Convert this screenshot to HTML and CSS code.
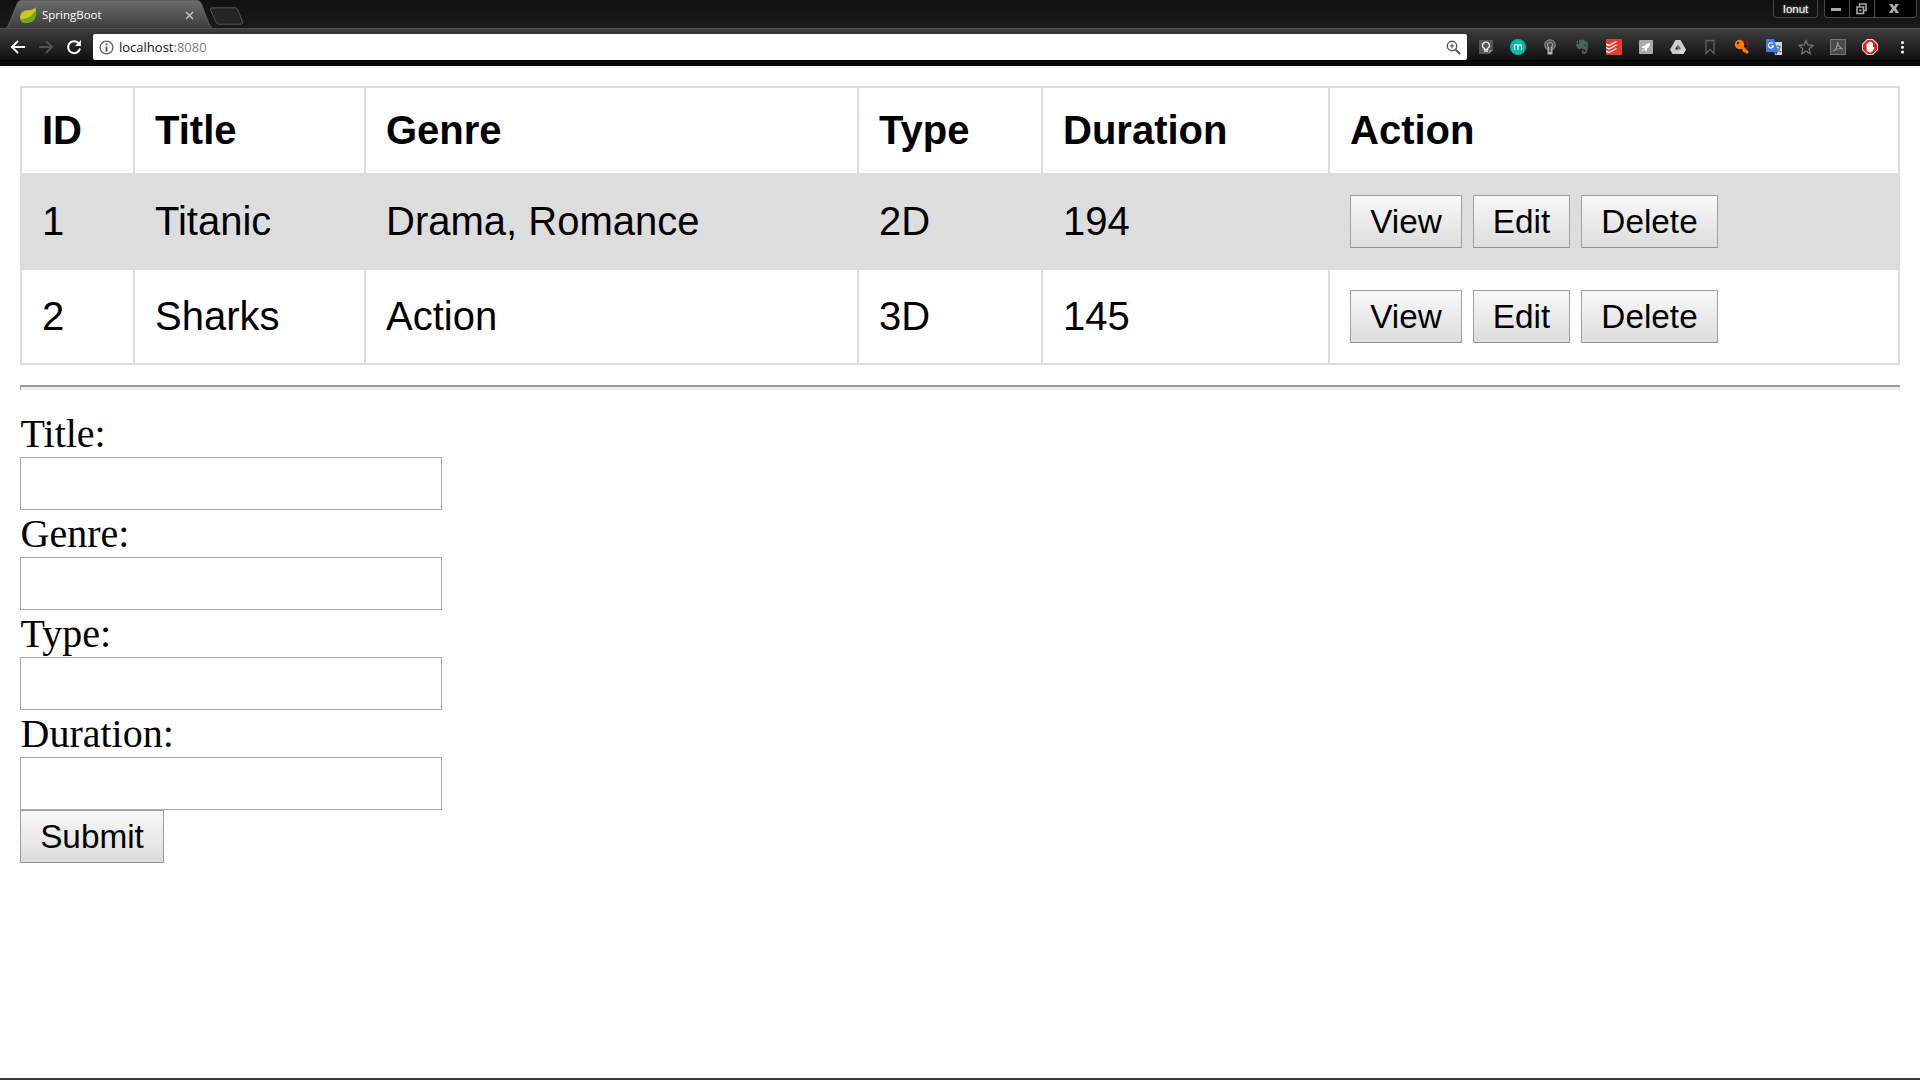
FILE: index.html
```html
<!DOCTYPE html>
<html lang="en">
<head>
<meta charset="utf-8">
<title>SpringBoot</title>
<link rel="stylesheet" href="styles.css">
</head>
<body>
<header class="browser">
  <div class="tabstrip">
    <div class="tab">
      <svg class="tab-shape" width="206" height="28" viewBox="0 0 206 28">
        <defs><linearGradient id="tabfill" x1="0" y1="0" x2="0" y2="1"><stop offset="0" stop-color="#6c6c6c"/><stop offset="1" stop-color="#3e3e3e"/></linearGradient></defs>
        <path d="M0 28C2 27 2 26 3 24L11 4Q12.500 .5 15 .5H191Q194 .5 195.500 4L203 24Q204 27 206 28Z" fill="url(#tabfill)"/>
        <path d="M0 27.500C2 27 2 26 3 24L11 4Q12.500 .5 15 .5H191Q194 .5 195.500 4L203 24Q204 27 206 27.500" fill="none" stroke="#777" stroke-opacity=".6"/>
      </svg>
      <div class="tab-content">
        <svg width="16" height="16" viewBox="0 0 16 16"><path d="M15.500 0C16.500 7 16 15 9 15.500H3C-1 14-1 6 4 4C8 2.500 13 4 15.500 0Z" fill="#c3cc1d"/><path d="M1 13.500C8 13 13 10 15.500 4C16 10 14 15 9 15.500H4Z" fill="#77a51c"/><path d="M1 13C7 13 12 10 15 5" fill="none" stroke="#568a1b"/></svg>
        <span class="tab-title">SpringBoot</span>
        <svg width="9" height="9" viewBox="0 0 9 9"><path d="M1 1L8 8M8 1L1 8" stroke="#c4c4c4" stroke-width="1.500"/></svg>
      </div>
    </div>
    <svg class="newtab" width="36" height="19" viewBox="0 0 36 19"><path d="M3 .8H26Q28 .8 29 3L33.500 15Q34 17.200 32 17.200H10Q8 17.200 7 15L1.500 3Q1 .8 3 .8Z" fill="#252525" stroke="#555"/></svg>
    <div class="spacer"></div>
    <div class="profile">Ionut</div>
    <div class="window-controls">
      <div class="control"><svg width="10" height="4"><path d="M0 1H10V4H0Z" fill="#aaa"/></svg></div>
      <div class="control"><svg width="11" height="12" viewBox="0 0 11 12"><path d="M3.500 3V1H10V7.500H8M1 4H7.500V10.500H1Z" fill="none" stroke="#aaa" stroke-width="1.600"/><path d="M3.300 6.300H5.300V8.300H3.300Z" fill="#aaa"/></svg></div>
      <div class="control wide"><svg width="10" height="9" viewBox="0 0 10 9"><path d="M0 0H3.500L5 2.500 6.500 0H10L7 4.200 10 9H6.500L5 6.300 3.500 9H0L3 4.200Z" fill="#aaa"/></svg></div>
    </div>
  </div>
  <div class="toolbar">
    <div class="nav">
      <svg width="16" height="16" viewBox="0 0 16 16"><path d="M15 8H2.500M8 2L2 8L8 14" fill="none" stroke="#fff" stroke-width="2"/></svg>
      <svg width="16" height="16" viewBox="0 0 16 16"><path d="M1 8H13.500M8 2L14 8L8 14" fill="none" stroke="#505050" stroke-width="2"/></svg>
      <svg width="16" height="16" viewBox="0 0 16 16"><path d="M12.500 4A6 6 0 1 0 14 9.500" fill="none" stroke="#fff" stroke-width="2"/><path d="M15 1V7H9Z" fill="#fff"/></svg>
    </div>
    <div class="omnibox">
      <svg width="15" height="15" viewBox="0 0 15 15"><circle cx="7.500" cy="7.500" r="6.400" fill="none" stroke="#606060" stroke-width="1.300"/><path d="M6.600 3.500H8.400V5.300H6.600ZM6.600 6.500H8.400V11.500H6.600Z" fill="#505050"/></svg>
      <span class="url">localhost<span class="port">:8080</span></span>
      <svg width="15" height="15" viewBox="0 0 15 15"><circle cx="6" cy="6" r="4.700" fill="none" stroke="#555" stroke-width="1.400"/><path d="M9.500 9.500L14 14" stroke="#555" stroke-width="2"/><path d="M3.800 6H8.200M6 3.800V8.200" stroke="#555" stroke-width="1.200"/></svg>
    </div>
    <div class="extensions">
      <svg viewBox="0 0 16 16"><path d="M1 1H15V11L11 15H1Z" fill="#565656"/><path d="M11 15V11H15Z" fill="#8b8b8b"/><path d="M6.300 10.500V9.300C3 7.500 4.500 3.200 8 3.200S13 7.500 9.700 9.300V10.500Z" fill="none" stroke="#eee" stroke-width="1.300"/><path d="M6 12.200H10" stroke="#eee" stroke-width="1.400"/></svg>
      <svg viewBox="0 0 16 16"><circle cx="8" cy="8" r="8" fill="#08bba8"/><path d="M4.500 11V5.500M4.500 7.200Q4.700 5.600 6.300 5.600T8 7.200V11M8 7.200Q8.300 5.600 9.800 5.600T11.500 7.200V11" fill="none" stroke="#e8fffc" stroke-width="1.200"/></svg>
      <svg viewBox="0 0 16 16"><circle cx="8" cy="6" r="5.200" fill="#555" stroke="#858585" stroke-width="1.200"/><circle cx="8" cy="6" r="2.700" fill="none" stroke="#999"/><path d="M5.500 8H10.500V15.500H5.500Z" fill="#aaa"/><path d="M8 5V13" stroke="#444" stroke-width="1.500"/><path d="M7 14H9" stroke="#ddd"/></svg>
      <svg viewBox="0 0 16 16"><path d="M5 1Q10-.5 11 2Q14 2 14 6Q14 15 10 15Q7 15 8 11.500L9.500 11Q9 13 10.500 13Q12 13 11.500 10.500Q9 11 7.500 9Q6 11 4 9.500Q2 8 2 5H5Z" fill="#516065"/><path d="M1.500 4L4 1V4Z" fill="#516065"/><path d="M10 6.500Q11.500 5.500 12.500 7" stroke="#222" fill="none"/></svg>
      <svg viewBox="0 0 16 16"><rect width="16" height="16" rx="1" fill="#e43d30"/><path d="M0 5L3 6.500L10.500 2.500M0 8.500L3 10L10.500 6M0 12L3 13.500L10.500 9.500" fill="none" stroke="#fff" stroke-width="1.300"/></svg>
      <svg viewBox="0 0 16 16"><rect x="1" y="1" width="14" height="14" rx="1" fill="#aaa"/><path d="M12 4Q8 4 6.500 7H4.500L3.800 9H6L7 10V12.200L9 11.500V9.500Q12 8 12 4Z" fill="#fff"/><path d="M4 12L6 10" stroke="#fff"/></svg>
      <svg viewBox="0 0 16 16"><path d="M5.500 1H10.500L16 10.500L13.500 15H2.500L0 10.500Z" fill="#ccc"/><path d="M8 5.500L11 10.500H5Z" fill="#282828"/><path d="M5.500 1L11 10.500H16L13.500 15H10.500L8 10.500Z" fill="#eee" opacity=".35"/></svg>
      <svg viewBox="0 0 16 16"><path d="M4 1.500H12V14.500L8 10.500L4 14.500Z" fill="none" stroke="#606060" stroke-width="1.300"/></svg>
      <svg viewBox="0 0 16 16"><circle cx="5.500" cy="5.500" r="4.700" fill="#ff7b00"/><path d="M7 7L14 14" stroke="#ff7b00" stroke-width="3"/><path d="M9 11L11 13" stroke="#ff7b00" stroke-width="2"/><circle cx="4" cy="4" r="1.300" fill="#333"/><path d="M13.500 1.500V6M13.500 7.500V9" stroke="#b50020" stroke-width="1.700"/></svg>
      <svg viewBox="0 0 16 16"><path d="M7 3H16V16H9Z" fill="#d7d7d7"/><path d="M9 7.500H15M12 6V8M14 8Q13 12 9.500 13.500M10.500 9Q12 12 15 13" fill="none" stroke="#607b80" stroke-width="1.200"/><path d="M0 0H8L12 13H1Q0 13 0 12Z" fill="#427eea"/><path d="M9 13H12L10 16Z" fill="#214fae"/><path d="M7 4.700A2.600 2.600 0 1 0 7.500 7H5.200" fill="none" stroke="#fff" stroke-width="1.200"/></svg>
      <svg viewBox="0 0 16 16"><path d="M8 1.500L10 6L15 6.500L11.200 9.800L12.300 14.700L8 12.100L3.700 14.700L4.800 9.800L1 6.500L6 6Z" fill="none" stroke="#747474" stroke-width="1.300"/></svg>
      <svg viewBox="0 0 16 16"><rect x=".5" y=".5" width="15" height="15" fill="#4b4b4b" stroke="#777"/><path d="M7.500 3Q8 8 13 10Q9 8.500 3 12Q7 11 7.700 3" fill="none" stroke="#999" stroke-width="1.100"/></svg>
      <svg viewBox="0 0 16 16"><path d="M5 0H11L16 5V11L11 16H5L0 11V5Z" fill="#ddd"/><path d="M5.500 1H10.500L15 5.500V10.500L10.500 15H5.500L1 10.500V5.500Z" fill="#e21b1b"/><path d="M4.500 4.500V10Q5 13.500 8 13.500Q10.500 13.500 12.500 8.500L11 8V4H9.800V3H8.500V2.500H7.300V3.500H6V4.500Z" fill="#fff"/><path d="M6 4.500V8M7.800 3.500V8M9.500 4V8" stroke="#ecc" stroke-width=".5"/></svg>
      <svg viewBox="0 0 16 16"><path d="M8.500 3.500H8.510M8.500 8.300H8.510M8.500 13.100H8.510" stroke="#fff" stroke-width="3" stroke-linecap="round"/></svg>
    </div>
  </div>
</header>
<main class="page">
  <table class="movies">
    <colgroup><col class="c-id"><col class="c-title"><col class="c-genre"><col class="c-type"><col class="c-duration"><col class="c-action"></colgroup>
    <tr class="head"><th>ID</th><th>Title</th><th>Genre</th><th>Type</th><th>Duration</th><th>Action</th></tr>
    <tr class="shaded"><td>1</td><td>Titanic</td><td>Drama, Romance</td><td>2D</td><td>194</td><td><div class="actions"><button class="btn view">View</button><button class="btn edit">Edit</button><button class="btn delete">Delete</button></div></td></tr>
    <tr><td>2</td><td>Sharks</td><td>Action</td><td>3D</td><td>145</td><td><div class="actions"><button class="btn view">View</button><button class="btn edit">Edit</button><button class="btn delete">Delete</button></div></td></tr>
  </table>
  <hr class="rule">
  <form class="movie-form">
    <label for="title">Title:</label><input id="title" type="text">
    <label for="genre">Genre:</label><input id="genre" type="text">
    <label for="type">Type:</label><input id="type" type="text">
    <label for="duration">Duration:</label><input id="duration" type="text">
    <button class="btn submit" type="button">Submit</button>
  </form>
</main>
<footer class="taskbar"></footer>
</body>
</html>
```
FILE: styles.css
```css
* { box-sizing: border-box; }
body {
  margin: 0;
  height: 1080px;
  display: flex;
  flex-direction: column;
  overflow: hidden;
  background: #fff;
  color: #000;
}
svg { display: block; flex: none; }

/* Browser frame */
.browser { height: 66px; flex: none; background: #080808; font-family: "Open Sans", sans-serif; }
.tabstrip { height: 28px; display: flex; align-items: flex-start; padding: 0 3px 0 6px; background: linear-gradient(#111, #1a1a1a); }
.tab { display: grid; width: 206px; height: 28px; }
.tab-shape, .tab-content { grid-area: 1 / 1; }
.tab-content { display: flex; align-items: center; padding: 2px 18px 0 14px; }
.tab-title { flex: 1; margin-left: 6px; font-size: 11.5px; line-height: 16px; color: #fff; }
.newtab { margin: 7px 0 0 -3px; }
.spacer { flex: 1; }
.profile {
  width: 45px; height: 18px; margin-right: 6px;
  border: 1px solid #484848; border-top: 0; border-radius: 0 0 4px 4px;
  background: #111; color: #fff; font: 11.5px/18px "Liberation Sans", Arial, sans-serif; text-align: center;
  text-shadow: 0 0 3px #999;
}
.window-controls {
  display: flex; width: 93px; height: 18px;
  border: 1px solid #484848; border-top: 0; border-radius: 0 0 4px 4px; background: #000;
}
.control { width: 25px; display: flex; align-items: center; justify-content: center; padding-right: 2px; border-right: 1px solid #484848; }
.control.wide { width: 41px; padding-right: 3px; padding-bottom: 1px; border-right: 0; }
.toolbar {
  height: 33px; display: flex; align-items: center; padding-top: 5px;
  background: linear-gradient(#3e3e3e, #101010);
  border-top: 1px solid #505050;
  border-bottom: 1px solid #000;
}
.nav { width: 93px; display: flex; gap: 12px; padding-left: 10px; }
.omnibox {
  width: 1374px; height: 26px; display: flex; align-items: center; padding: 0 6px 0 6px;
  background: #fff; border-radius: 2px;
}
.url { flex: 1; margin-left: 5px; font-size: 13px; line-height: 20px; color: #111; }
.port { color: #808080; }
.extensions { display: flex; gap: 16px; padding-left: 11px; }
.extensions svg { width: 16px; height: 16px; }

/* Page content */
.page { flex: 1; padding: 20px 20px 0; }
.movies {
  width: 1880px; table-layout: fixed; border-collapse: collapse;
  font: 40px/45px "Liberation Sans", Arial, sans-serif;
}
.c-id { width: 113px; }
.c-title { width: 231px; }
.c-genre { width: 493px; }
.c-type { width: 184px; }
.c-duration { width: 287px; }
.c-action { width: 570px; }
.movies tr { height: 95px; }
.movies .head { height: 87px; }
.movies th, .movies td { border: 2px solid #ddd; padding: 0 20px; text-align: left; vertical-align: middle; }
.shaded { background: #ddd; }
.actions { display: flex; gap: 11px; }
.btn {
  height: 53px; padding: 0;
  border: 1px solid #a0a0a0; border-bottom-color: #909090; border-radius: 1px;
  background: linear-gradient(#f8f8f8, #ddd);
  color: #000; font: 33.33px/38px "Liberation Sans", Arial, sans-serif;
}
.view { width: 112px; }
.edit { width: 97px; }
.delete { width: 137px; }
.submit { width: 144px; }
.rule { height: 5px; margin: 20px 0; border: 0; border-top: 2px solid #9a9a9a; border-left: 1px solid #9a9a9a; background: #eee; }
.movie-form { display: flex; flex-direction: column; align-items: flex-start; font: 40px/47px "Liberation Serif", "Times New Roman", serif; }
.movie-form label { padding-left: .5px; }
.movie-form input { width: 422px; height: 53px; border: 1px solid #a9a9a9; padding: 3px; background: #fff; font: 33.33px "Liberation Sans", Arial, sans-serif; }
.taskbar { height: 2px; flex: none; background: #3a3838; }
```
